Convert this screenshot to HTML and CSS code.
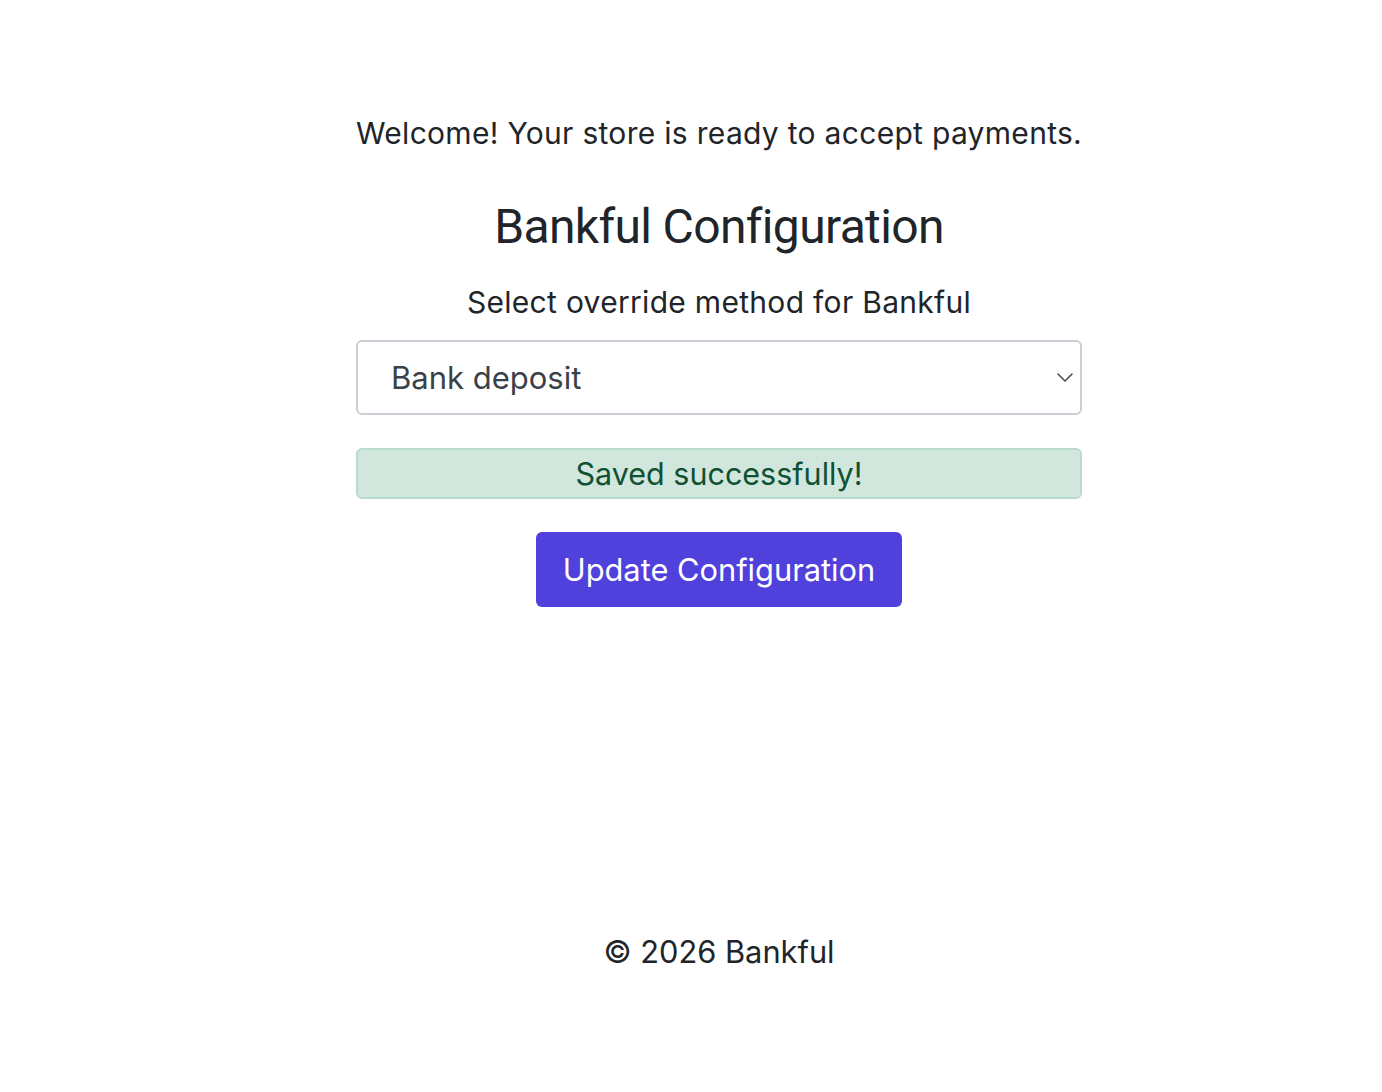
FILE: index.html
```html
<!DOCTYPE html>
<html lang="en">
<head>
<meta charset="utf-8">
<title>Bankful Configuration</title>
<link rel="stylesheet" href="styles.css">
</head>
<body>
<main class="page">
  <div class="wrap">
    <p class="welcome">Welcome! Your store is ready to accept payments.</p>
    <h2 class="title">Bankful Configuration</h2>
    <label class="label" for="method">Select override method for Bankful</label>
    <div class="select-box">
      <select id="method" class="select">
        <option>Bank deposit</option>
      </select>
      <svg class="chev" width="16" height="9" viewBox="0 0 16 9" aria-hidden="true"><path d="M1 1 L8 8 L15 1" fill="none" stroke="#4a4f57" stroke-width="1.6" stroke-linecap="round" stroke-linejoin="round"/></svg>
    </div>
    <div class="alert">Saved successfully!</div>
    <div class="actions"><button class="btn" type="button">Update Configuration</button></div>
  </div>
  <footer class="footer">© 2026 Bankful</footer>
</main>
</body>
</html>
```
FILE: styles.css
```css
* { box-sizing: border-box; }
html, body { margin: 0; padding: 0; background: #fff; }
body { font-family: Inter, "Helvetica Neue", Arial, sans-serif; color: #212529; }
.page { display: flex; flex-direction: column; align-items: flex-start; padding-left: 356px; }
.wrap { width: 726px; display: flex; flex-direction: column; align-items: stretch; padding-top: 112px; }
.welcome { margin: 0 -20px; white-space: nowrap; text-align: center; font-size: 30px; letter-spacing: 0.3px; line-height: 42px; }
.title { margin: 44px 0 0; text-align: center; font-family: Roboto, Inter, sans-serif; font-size: 48px; font-weight: 400; letter-spacing: -0.65px; line-height: 58px; }
.label { margin-top: 26px; text-align: center; font-size: 30px; letter-spacing: 0.3px; line-height: 40px; }
.select-box { position: relative; margin-top: 18px; }
.select { -webkit-appearance: none; appearance: none; width: 100%; height: 75px; border: 2px solid #cbcfd6; border-radius: 6px; background: #fff; padding: 0 60px 0 33px; font-family: inherit; font-size: 31px; color: #3b4149; }
.chev { position: absolute; right: 9px; top: 33px; width: 16px; height: 9px; }
.alert { margin-top: 33px; height: 51px; border: 2px solid #badbcc; border-radius: 6px; background: #d1e7dd; color: #0f5132; font-size: 30.5px; display: flex; align-items: center; justify-content: center; }
.actions { display: flex; justify-content: center; margin-top: 33px; }
.btn { height: 75px; padding: 0 27px; border: 0; border-radius: 6px; background: #5040dc; color: #fff; font-family: inherit; font-size: 30.8px; }
.footer { width: 726px; margin-top: 325px; text-align: center; font-size: 30.8px; line-height: 40px; }
```
